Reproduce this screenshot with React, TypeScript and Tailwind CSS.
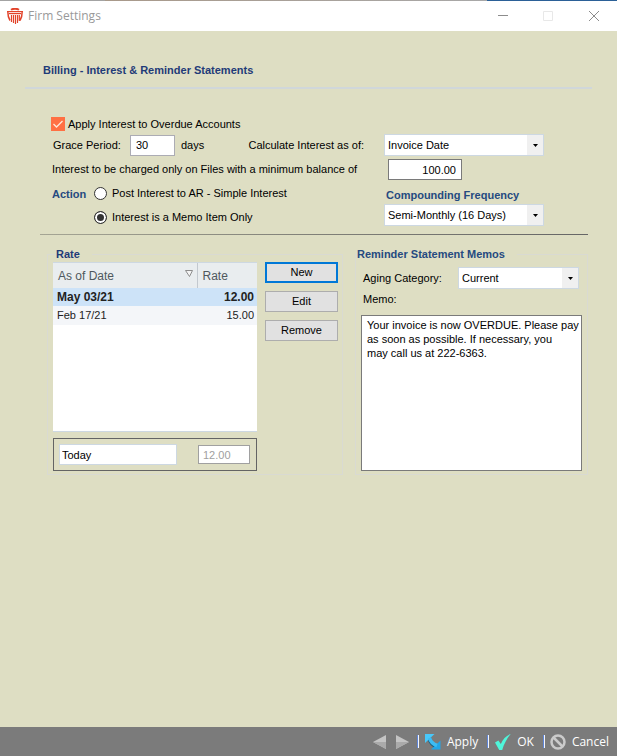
import React, { useState } from 'react';

type SelectBoxProps = {
    id: string;
    options: string[];
    className?: string;
};

const RATES = [
    { date: 'May 03/21', rate: '12.00' },
    { date: 'Feb 17/21', rate: '15.00' },
];

const MEMO = `Your invoice is now OVERDUE. Please pay
as soon as possible. If necessary, you
may call us at 222-6363.`;

const SelectBox: React.FC<SelectBoxProps> = ({ id, options, className }) => (
    <div className={`relative h-[22px] ${className ?? ''}`}>
        <select
            id={id}
            className="block h-full w-full appearance-none border border-[#cdd8e2] bg-white pl-[3px] pr-5 text-[11px] leading-4 text-black outline-none"
        >
            {options.map((option) => (
                <option key={option}>{option}</option>
            ))}
        </select>
        <span className="pointer-events-none absolute inset-y-px right-px flex w-4 items-center justify-center bg-[#f0f0f0]">
            <svg width="5" height="3" viewBox="0 0 5 3">
                <path d="M0 0h5L2.5 3z" fill="#000" />
            </svg>
        </span>
    </div>
);

const AppLogo = () => (
    <svg width="16" height="16" viewBox="0 0 16 16" fill="none" stroke="#e2432a">
        <path d="M4 1.8C6 .4 10 .4 12 1.8" strokeWidth="2" />
        <path d="M0 3.5h16" strokeWidth="1" />
        <path d="M2 5.5h12" strokeWidth="1.4" />
        <path d="M.8 3.5c0 4 .7 6.5 2.2 9M15.2 3.5c0 4-.7 6.5-2.2 9" strokeWidth="1.5" />
        <path d="M4.5 7v7M6.5 7v8M8.5 7v9M10.5 7v8M12.3 7v6" strokeWidth="1.2" />
    </svg>
);

const TitleBar = () => (
    <header className="flex h-[31px] shrink-0 flex-col bg-white">
        <div className="flex h-px">
            <span className="w-[17%] bg-[#a3a3a3]" />
            <span className="w-[62%] bg-gradient-to-r from-[#a8998a] to-[#a8a8a8]" />
            <span className="flex-1 bg-[#2b6097]" />
        </div>
        <div className="flex flex-1 items-center pl-[7px] pr-[17px]">
            <AppLogo />
            <h1 className="ml-[5px] font-['Open_Sans',sans-serif] text-xs text-[#999]">Firm Settings</h1>
            <div className="ml-auto flex items-center gap-[35px] text-[#8c8c8c]">
                <button type="button" aria-label="Minimize">
                    <svg width="10" height="12" viewBox="0 0 10 12" className="block">
                        <path d="M0 5.5h10" stroke="currentColor" />
                    </svg>
                </button>
                <button type="button" aria-label="Maximize" disabled className="text-[#e8e8e8]">
                    <svg width="10" height="10" viewBox="0 0 10 10" className="block">
                        <path d="M.5.5h9v9h-9z" fill="none" stroke="currentColor" />
                    </svg>
                </button>
                <button type="button" aria-label="Close">
                    <svg width="12" height="12" viewBox="0 0 12 12" className="block">
                        <path d="M1 1l10 10M11 1L1 11" stroke="currentColor" />
                    </svg>
                </button>
            </div>
        </div>
    </header>
);

const InterestForm = () => {
    const [apply, setApply] = useState(true);
    const [action, setAction] = useState('memo');

    const radioClass =
        'h-[13px] w-[13px] appearance-none rounded-full border border-[#333] bg-white checked:bg-[#333] checked:shadow-[inset_0_0_0_2px_#fff]';

    return (
        <section className="pl-[11px]">
            <label className="flex h-4 items-center gap-[3px]">
                <span className="relative h-[14px] w-[14px]">
                    <input
                        type="checkbox"
                        checked={apply}
                        onChange={(e) => setApply(e.target.checked)}
                        className="block h-[14px] w-[14px] appearance-none border border-[#ff7043] bg-white checked:bg-[#ff7043]"
                    />
                    {apply && (
                        <svg width="14" height="14" viewBox="0 0 14 14" className="pointer-events-none absolute inset-0">
                            <path d="M2.5 7l3 3 6-6" fill="none" stroke="#ffe9d8" strokeWidth="1.3" />
                        </svg>
                    )}
                </span>
                Apply Interest to Overdue Accounts
            </label>

            <div className="mt-[2px] flex items-center">
                <div className="flex flex-1 items-center pl-[2px]">
                    <label htmlFor="grace" className="w-[77px]">Grace Period:</label>
                    <input
                        id="grace"
                        defaultValue="30"
                        className="h-[21px] w-[45px] border border-[#acacb4] bg-white pl-[5px] outline-none"
                    />
                    <span className="ml-[6px]">days</span>
                    <label htmlFor="asof" className="ml-auto pr-5">Calculate Interest as of:</label>
                </div>
                <div className="w-[204px]">
                    <SelectBox id="asof" options={['Invoice Date', 'Due Date']} className="w-40" />
                </div>
            </div>

            <div className="mt-[3px] flex items-center">
                <label htmlFor="minimum" className="flex-1 pl-px">
                    Interest to be charged only on Files with a minimum balance of
                </label>
                <div className="w-[204px] pl-1">
                    <input
                        id="minimum"
                        defaultValue="100.00"
                        className="block h-[21px] w-[74px] border border-[#7a7a7a] bg-white pr-[5px] text-right outline-none"
                    />
                </div>
            </div>

            <div className="mt-[5px] flex">
                <fieldset className="flex flex-1 pl-px">
                    <legend className="float-left w-[42px] pt-px font-bold leading-4 text-[#254a80]">Action</legend>
                    <div className="flex flex-col gap-2">
                        <label className="flex h-4 items-center gap-[5px]">
                            <input
                                type="radio"
                                name="action"
                                checked={action === 'post'}
                                onChange={() => setAction('post')}
                                className={radioClass}
                            />
                            Post Interest to AR - Simple Interest
                        </label>
                        <label className="flex h-4 items-center gap-[5px]">
                            <input
                                type="radio"
                                name="action"
                                checked={action === 'memo'}
                                onChange={() => setAction('memo')}
                                className={radioClass}
                            />
                            Interest is a Memo Item Only
                        </label>
                    </div>
                </fieldset>
                <div className="flex w-[204px] flex-col gap-px pt-[2px]">
                    <label htmlFor="frequency" className="pl-[2px] font-bold leading-4 text-[#254a80]">
                        Compounding Frequency
                    </label>
                    <SelectBox
                        id="frequency"
                        options={['Semi-Monthly (16 Days)', 'Monthly', 'Annually']}
                        className="w-40"
                    />
                </div>
            </div>
        </section>
    );
};

const RatePanel = () => (
    <fieldset className="ml-[7px] flex flex-1 border border-[#d9dad2] pb-[3px] pl-[5px] pr-[4px]">
        <legend className="ml-[2px] pl-px pr-3 font-bold leading-4 text-[#1f3b78]">Rate</legend>
        <div className="flex flex-1 flex-col">
            <div className="h-[170px] border-y border-[#cdd8e2] bg-white">
                <table className="w-full text-[#222]">
                    <thead>
                        <tr className="h-[25px] bg-[#e9edef] text-left text-xs text-[#4f585d]">
                            <th className="border-r border-[#c3c9cf] pl-[5px] font-normal">
                                <span className="flex items-center justify-between pr-1">
                                    As of Date
                                    <svg width="8" height="7" viewBox="0 0 8 7" className="-mt-1">
                                        <path d="M.5.5h7L4.5 6.5z" fill="#f4f4f4" stroke="#8d8d8d" />
                                    </svg>
                                </span>
                            </th>
                            <th className="w-[60px] pl-[5px] font-normal">Rate</th>
                        </tr>
                    </thead>
                    <tbody>
                        {RATES.map((row, i) => (
                            <tr
                                key={row.date}
                                className={i === 0 ? 'h-[18px] bg-[#cde3f8] text-xs font-bold' : 'h-[19px] bg-[#f4f6f9]'}
                            >
                                <td className="pb-px pl-1">{row.date}</td>
                                <td className="pb-px pr-[3px] text-right">{row.rate}</td>
                            </tr>
                        ))}
                    </tbody>
                </table>
            </div>
            <div className="mt-[6px] flex h-[33px] items-center justify-between border border-[#646464] pl-[5px] pr-[6px]">
                <input
                    aria-label="Date"
                    defaultValue="Today"
                    className="h-[21px] w-[118px] border border-[#cdd8e2] bg-white pl-[2px] outline-none"
                />
                <input
                    aria-label="Current rate"
                    defaultValue="12.00"
                    disabled
                    className="h-[19px] w-[52px] border border-[#a0a0a0] bg-white pl-1 text-[#a0a0a0]"
                />
            </div>
        </div>
        <div className="ml-2 flex w-[73px] flex-col gap-2">
            <button type="button" className="h-[21px] border-2 border-[#0078d7] bg-[#e1e1e1]">New</button>
            <button type="button" className="h-[21px] border border-[#adadad] bg-[#e1e1e1]">Edit</button>
            <button type="button" className="h-[21px] border border-[#adadad] bg-[#e1e1e1]">Remove</button>
        </div>
    </fieldset>
);

const MemoPanel = () => (
    <fieldset className="ml-3 w-[233px] border border-[#d9dad2] pb-[3px] pl-[5px] pr-[5px]">
        <legend className="-ml-1 pr-3 font-bold leading-4 text-[#254a80]">Reminder Statement Memos</legend>
        <div className="mt-[5px] flex items-center justify-between pl-[2px] pr-[3px]">
            <label htmlFor="aging">Aging Category:</label>
            <SelectBox id="aging" options={['Current', '30 Days', '60 Days']} className="w-[121px]" />
        </div>
        <label htmlFor="memo" className="mt-[2px] block pl-[2px] leading-4">Memo:</label>
        <textarea
            id="memo"
            defaultValue={MEMO}
            className="mt-2 block h-[156px] w-full resize-none border border-[#7a7a7a] bg-white py-[2px] pl-[5px] leading-[14px] outline-none"
        />
    </fieldset>
);

const Separator = () => <span className="h-[13px] w-[2px] border-l border-[#5f86d8] bg-[#f4f6fb]" />;

const Footer = () => (
    <footer className="flex h-[29px] shrink-0 items-center justify-end bg-[#7b7b7b] pr-2 font-['Open_Sans',sans-serif] text-xs text-white">
        <button type="button" aria-label="Previous">
            <svg width="13" height="14" viewBox="0 0 13 14" className="block">
                <path d="M13 0v14L0 7z" fill="#c4c4c4" />
                <path d="M13 7v7L0 7z" fill="#aaa" />
            </svg>
        </button>
        <button type="button" aria-label="Next" className="ml-[10px]">
            <svg width="13" height="14" viewBox="0 0 13 14" className="block">
                <path d="M0 0v14l13-7z" fill="#c4c4c4" />
                <path d="M0 7v7l13-7z" fill="#aaa" />
            </svg>
        </button>
        <span className="ml-2 flex items-center">
            <Separator />
            <button type="button" className="ml-[6px] flex items-center gap-[6px]">
                <svg width="16" height="16" viewBox="0 0 16 16">
                    <path d="M4.500 5C5.500 8.500 8 11 11.500 12.500" fill="none" stroke="#1b5f80" strokeWidth="4" />
                    <path d="M0 0h9.500L0 9z" fill="#48c8fa" />
                    <path d="M15.500 6.500v9H6z" fill="#22a6e8" />
                    <path d="M4.500 4C5.500 7.500 8 10 12 11.500" fill="none" stroke="#3cbcf4" strokeWidth="3.6" />
                </svg>
                Apply
            </button>
        </span>
        <span className="ml-[9px] flex items-center">
            <Separator />
            <button type="button" className="ml-[6px] flex items-center gap-[6px]">
                <svg width="16" height="16" viewBox="0 0 16 16">
                    <path d="M0 8.5l3.4-2L5.800 10C8 5.200 11 1.800 15.700 0 12 4.500 9.200 9.500 7.200 16H4.200z" fill="#4ff5da" />
                </svg>
                OK
            </button>
        </span>
        <span className="ml-[9px] flex items-center">
            <Separator />
            <button type="button" className="ml-[5px] flex items-center gap-[6px]">
                <svg width="16" height="16" viewBox="0 0 16 16" fill="none" stroke="#cbcbcb" strokeWidth="2.5">
                    <circle cx="8" cy="8" r="6.5" />
                    <path d="M3.5 3.5l9 9" />
                </svg>
                Cancel
            </button>
        </span>
    </footer>
);

const App: React.FC = () => {
    return (
        <div className="flex min-h-screen flex-col bg-[#dedec3] font-['Liberation_Sans',Arial,sans-serif] text-[11px] text-black">
            <TitleBar />

            <main className="flex-1 px-[25px] pt-[31px]">
                <h2 className="pl-[18px] font-bold leading-4 text-[#1f3b78]">Billing - Interest &amp; Reminder Statements</h2>
                <div className="mt-[9px] h-[2px] bg-[#d0d7da]" />

                <div className="mt-[27px] pl-[15px] pr-1">
                    <InterestForm />
                    <div className="mt-2 h-px bg-gradient-to-r from-[#a5a594] via-[#808078] to-[#666]" />
                    <div className="mt-[11px] flex items-stretch">
                        <RatePanel />
                        <MemoPanel />
                    </div>
                </div>
            </main>

            <Footer />
        </div>
    );
};

export default App;
